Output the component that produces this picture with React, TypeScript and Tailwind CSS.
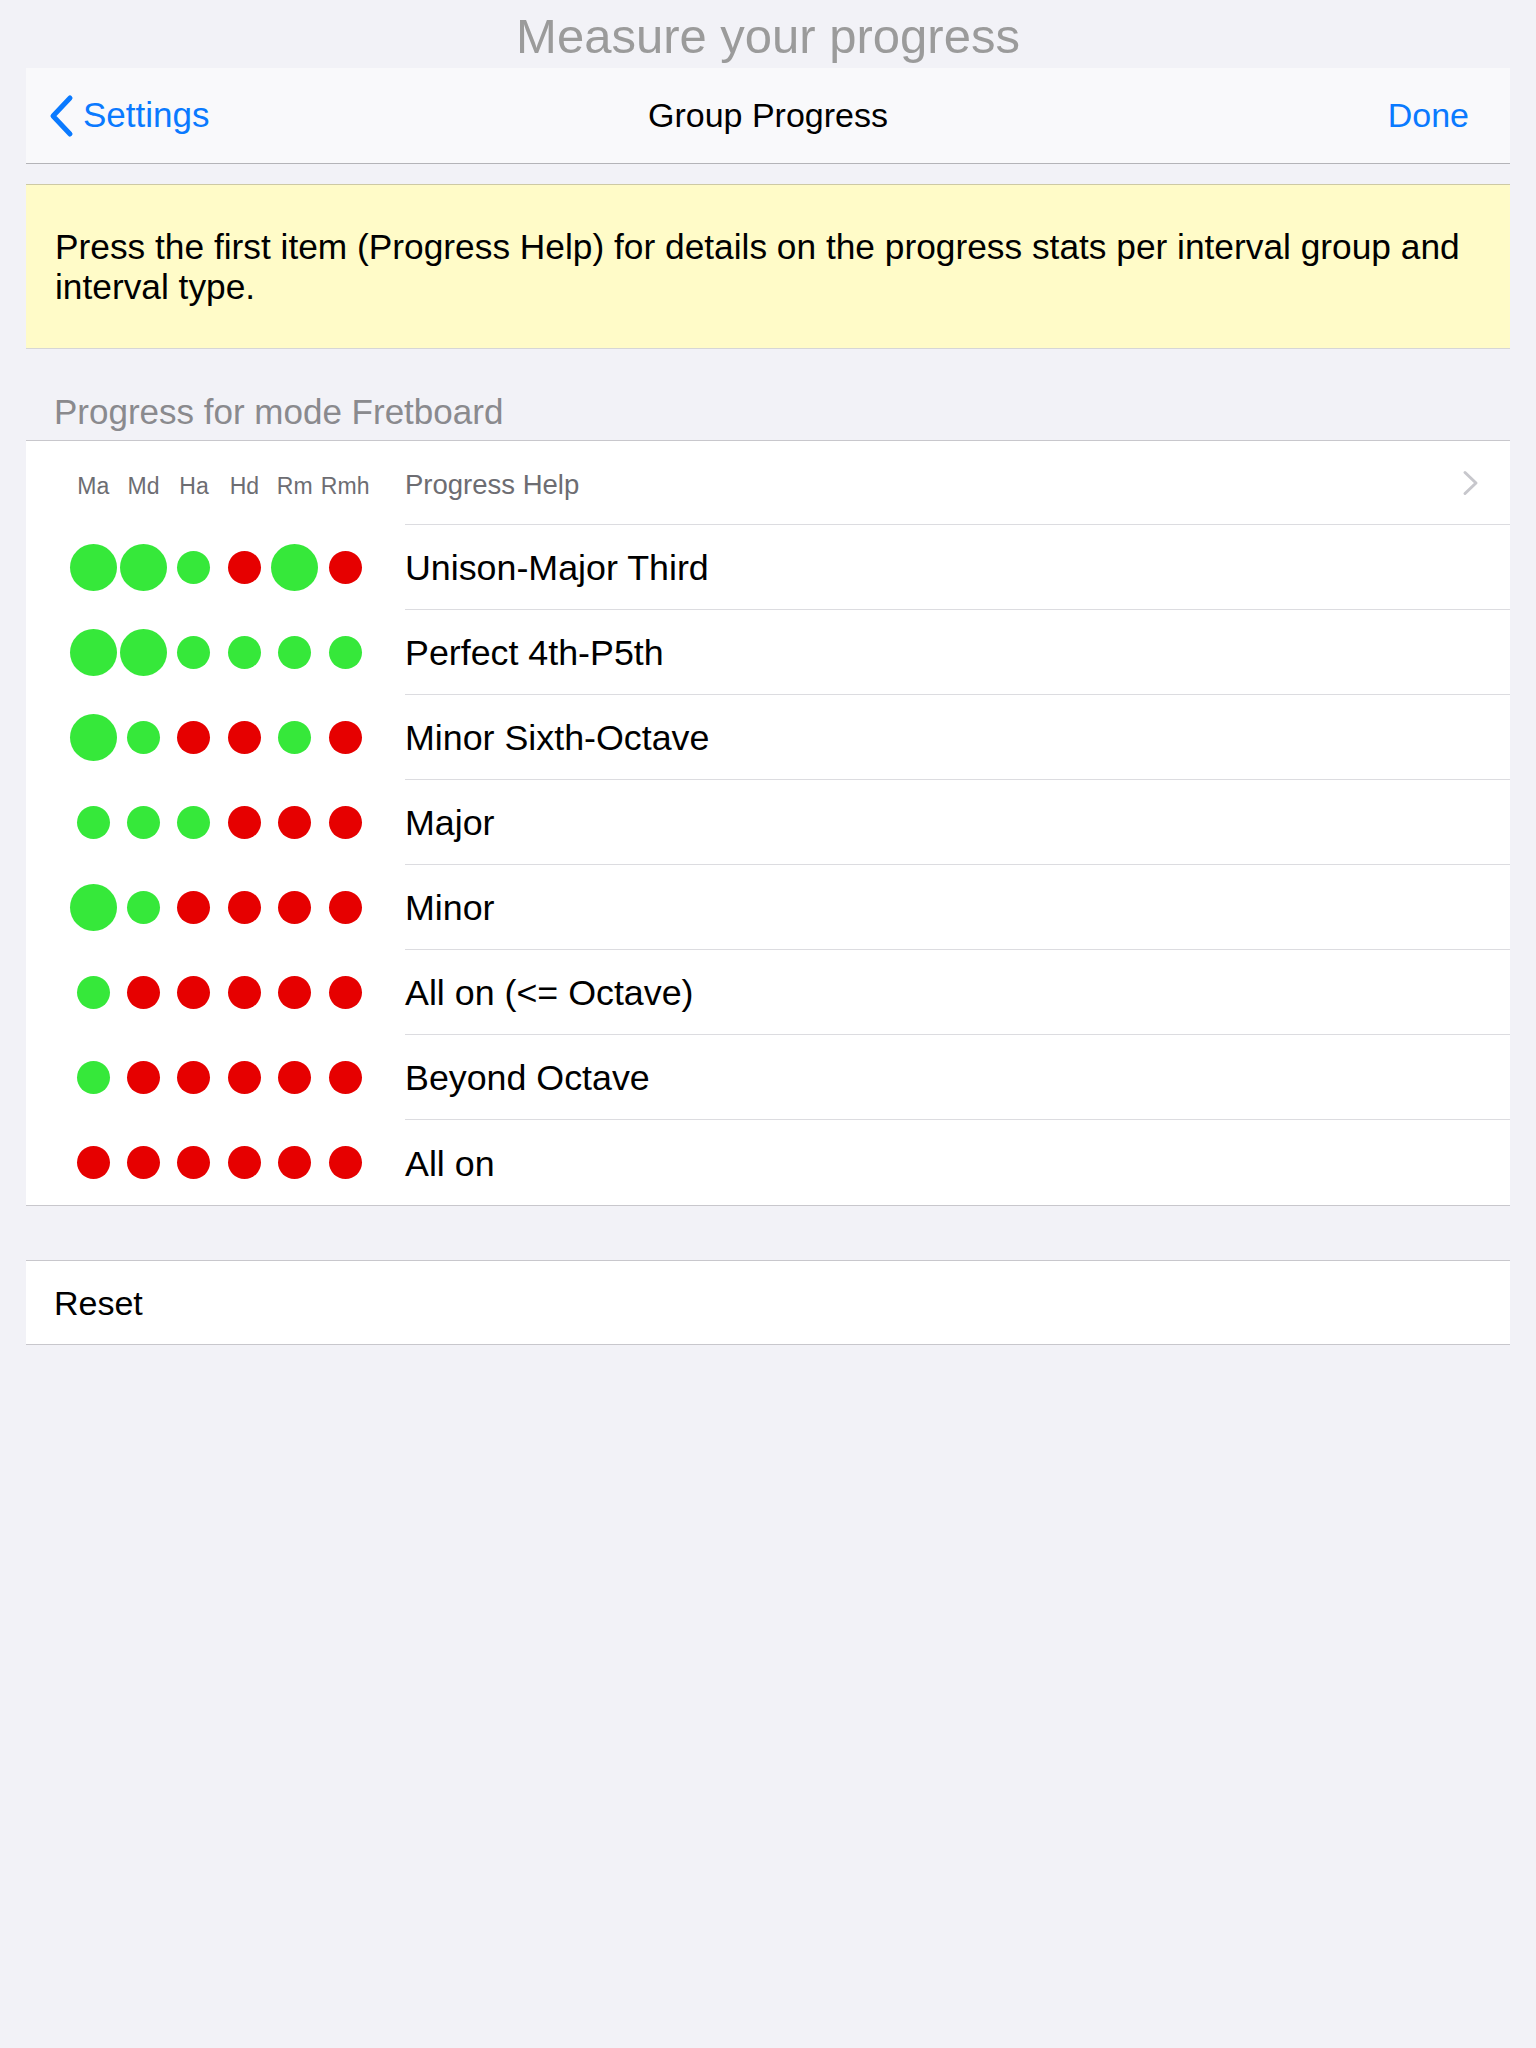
import React from "react";

type Dot = "G" | "g" | "r";

const rows: { label: string; dots: Dot[] }[] = [
  { label: "Unison-Major Third", dots: ["G", "G", "g", "r", "G", "r"] },
  { label: "Perfect 4th-P5th", dots: ["G", "G", "g", "g", "g", "g"] },
  { label: "Minor Sixth-Octave", dots: ["G", "g", "r", "r", "g", "r"] },
  { label: "Major", dots: ["g", "g", "g", "r", "r", "r"] },
  { label: "Minor", dots: ["G", "g", "r", "r", "r", "r"] },
  { label: "All on (<= Octave)", dots: ["g", "r", "r", "r", "r", "r"] },
  { label: "Beyond Octave", dots: ["g", "r", "r", "r", "r", "r"] },
  { label: "All on", dots: ["r", "r", "r", "r", "r", "r"] },
];

const columns = ["Ma", "Md", "Ha", "Hd", "Rm", "Rmh"];

function ProgressDot({ kind }: { kind: Dot }) {
  if (kind === "G") return <span className="block w-[47px] h-[47px] rounded-full bg-[#36e83a]" />;
  if (kind === "g") return <span className="block w-[33px] h-[33px] rounded-full bg-[#36e83a]" />;
  return <span className="block w-[33px] h-[33px] rounded-full bg-[#e60000]" />;
}

export default function App() {
  return (
    <div className="min-h-[2048px] w-full bg-[#f2f2f7] font-['Liberation_Sans',Arial,sans-serif]">
      {/* page title */}
      <div className="h-[68px] text-center text-[49px] leading-[72px] text-[#9b9b9b]">
        Measure your progress
      </div>

      <div className="px-[26px]">
        {/* nav bar */}
        <div className="h-[96px] bg-[#f9f9fb] border-b border-[#b4b4b8] grid grid-cols-[1fr_auto_1fr] items-center">
          <div className="flex items-center pl-[22px] text-[#0a7aff] text-[35px]">
            <svg width="30" height="44" viewBox="0 0 30 44" className="mr-[5px]">
              <path d="M22 4 L5 22 L22 40" fill="none" stroke="#0a7aff" strokeWidth="5" strokeLinecap="round" strokeLinejoin="round" />
            </svg>
            Settings
          </div>
          <div className="text-[34px] text-black">Group Progress</div>
          <div className="text-right pr-[41px] text-[34px] text-[#0a7aff]">Done</div>
        </div>

        {/* help note */}
        <div className="mt-[20px] h-[165px] bg-[#fffbc8] border-t border-b border-t-[#cdc9a4] border-b-[#d6d6d6] flex items-center pl-[29px] pr-[30px]">
          <p className="text-[35.3px] leading-[40px] text-black">
            Press the first item (Progress Help) for details on the progress stats per interval group and interval type.
          </p>
        </div>

        {/* section header */}
        <div className="h-[91px] flex items-end pb-[8px] pl-[28px] text-[35px] leading-[40px] text-[#8a8a8e]">
          Progress for mode Fretboard
        </div>

        {/* table */}
        <div className="bg-white border-y border-[#c8c7cc]">
          <div className="h-[84px] flex">
            <div className="w-[379px] pl-[42px] pt-[7px] grid grid-cols-[repeat(6,50.4px)] items-center">
              {columns.map((c) => (
                <span key={c} className="text-center text-[23px] text-[#6d6d72]">
                  {c}
                </span>
              ))}
            </div>
            <div className="flex-1 flex items-center justify-between border-b border-[#dcdce0] pr-[29px]">
              <span className="pt-[5px] text-[27.5px] text-[#6d6d72]">Progress Help</span>
              <svg width="20" height="26" viewBox="0 0 20 26">
                <path d="M4 2.5 L15 13 L4 23.5" fill="none" stroke="#c7c7cc" strokeWidth="3" strokeLinecap="round" strokeLinejoin="round" />
              </svg>
            </div>
          </div>

          {rows.map((row, i) => (
            <div key={row.label} className="h-[85px] flex">
              <div className="w-[379px] pl-[42px] grid grid-cols-[repeat(6,50.4px)] items-center justify-items-center">
                {row.dots.map((d, j) => (
                  <ProgressDot key={j} kind={d} />
                ))}
              </div>
              <div
                className={
                  i < rows.length - 1
                    ? "flex-1 flex items-center pt-[4px] border-b border-[#dcdce0] text-[35.8px] text-black"
                    : "flex-1 flex items-center pt-[4px] text-[35.8px] text-black"
                }
              >
                {row.label}
              </div>
            </div>
          ))}
        </div>

        {/* reset */}
        <div className="mt-[54px] h-[85px] bg-white border-y border-[#c8c7cc] flex items-center pt-[2px] pl-[28px] text-[34px] text-black">
          Reset
        </div>
      </div>
    </div>
  );
}
